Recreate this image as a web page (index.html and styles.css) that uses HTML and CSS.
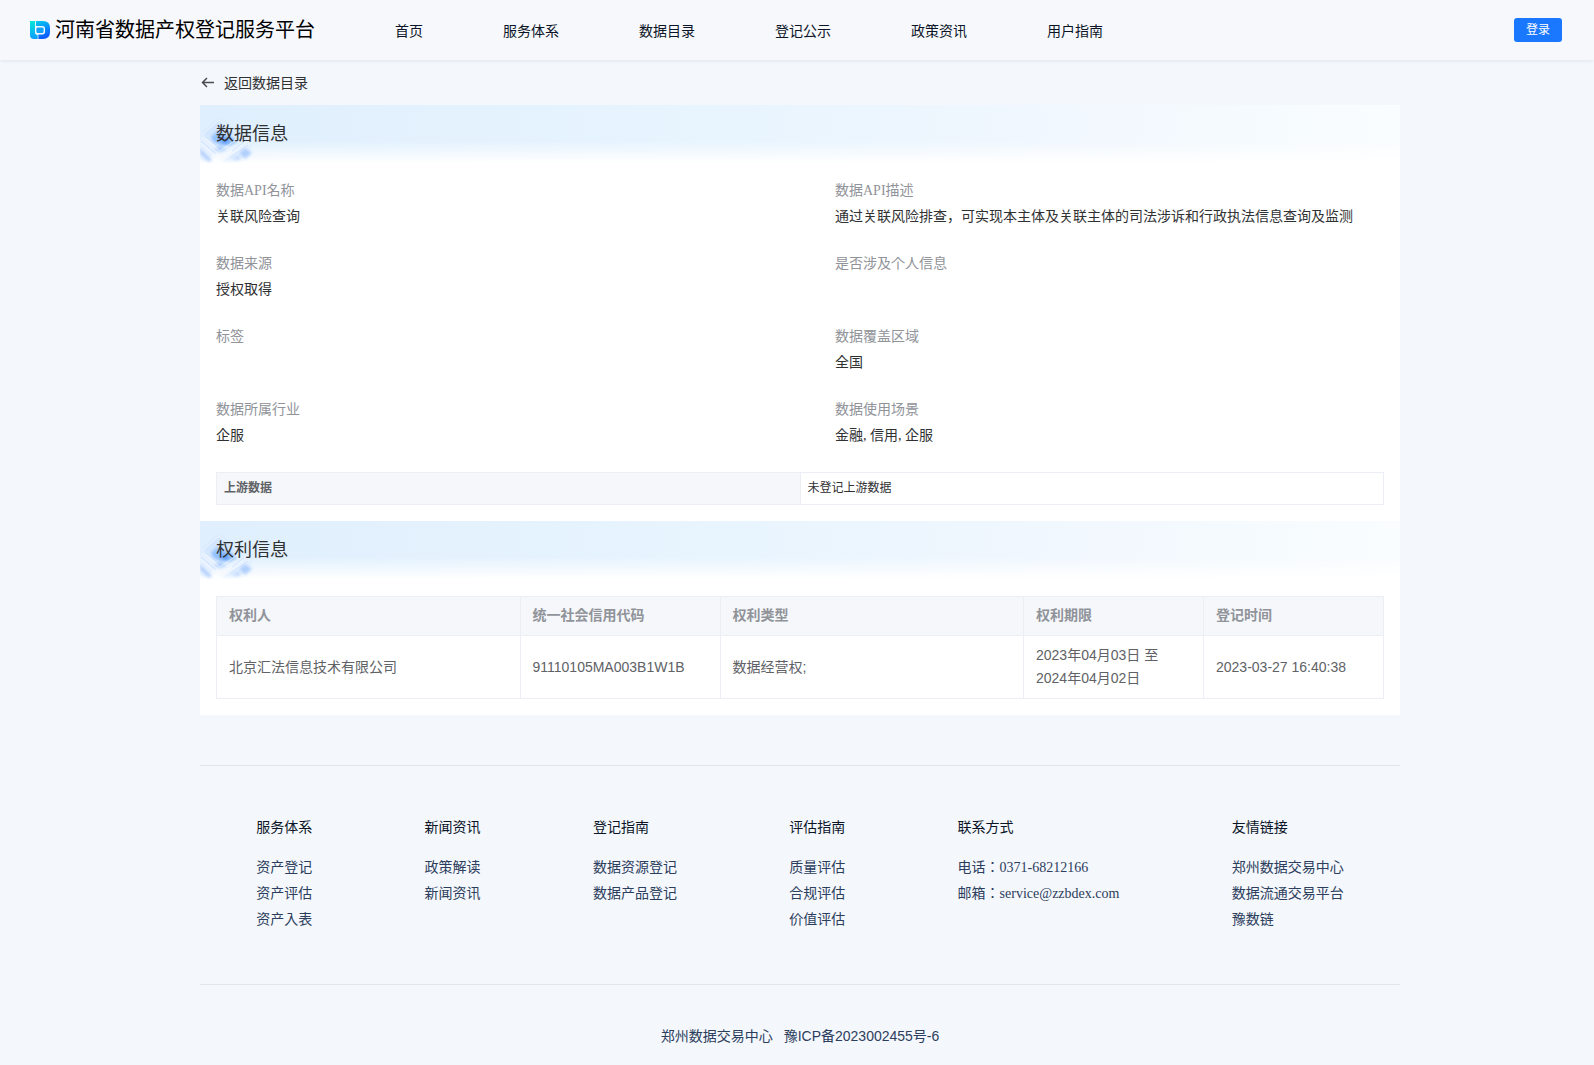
FILE: index.html
```html
<!DOCTYPE html>
<html lang="ja">

<head>
    <meta charset="UTF-8" />
    <meta name="viewport" content="width=device-width, initial-scale=1.0" />
    <title>河南省数据产权登记服务平台</title>
    <link rel="stylesheet" href="styles.css">
</head>

<body>
    <header class="header">
        <a class="logo" href="#">
            <svg width="20" height="20" viewBox="0 0 20 20" aria-hidden="true">
                <defs>
                    <linearGradient id="logoLeft" x1="0" y1="0" x2="0" y2="1">
                        <stop offset="0" stop-color="#08e8d4" />
                        <stop offset="1" stop-color="#0a9cff" />
                    </linearGradient>
                    <linearGradient id="logoRight" x1="0" y1="0" x2="0.3" y2="1">
                        <stop offset="0" stop-color="#08cdf0" />
                        <stop offset="1" stop-color="#0a5cff" />
                    </linearGradient>
                </defs>
                <path d="M0 1h5v11q0 3 3 3v4H4q-4 0-4-4z" fill="url(#logoLeft)" />
                <path d="M6 1h7q7 0 7 7v4q0 7-7 7H8V6H6z" fill="url(#logoRight)" />
                <rect x="5.700" y="6.700" width="8.600" height="7" rx="2" fill="#12a2f8" stroke="#f2fbff" stroke-width="1.400" />
                <path d="M5.500 1v6M8 14v5" stroke="#d9f3ff" stroke-width=".8" />
            </svg>
            <span>河南省数据产权登记服务平台</span>
        </a>
        <nav class="nav">
            <a href="#">首页</a>
            <a href="#">服务体系</a>
            <a href="#">数据目录</a>
            <a href="#">登记公示</a>
            <a href="#">政策资讯</a>
            <a href="#">用户指南</a>
        </nav>
        <button class="login-btn" type="button">登录</button>
    </header>

    <!-- 装饰图形, 两个标题栏共用 -->
    <svg class="defs" width="0" height="0" aria-hidden="true">
        <defs>
            <filter id="soft" x="-20%" y="-20%" width="140%" height="140%">
                <feGaussianBlur stdDeviation="1.600" />
            </filter>
            <symbol id="crystal" viewBox="0 0 56 60">
                <g filter="url(#soft)">
                    <path d="M19 14L38 27 19 41 2 28z" fill="#d3e6fd" />
                    <path d="M0 30L20 43 5 57 0 54z" fill="#e6f1ff" />
                    <path d="M22 56L50 36 52 44 36 56z" fill="#e2efff" />
                    <path d="M11 32L17 26 24 29 32 32 37 37 29 41 20 40 13 37z" fill="#94c2fd" />
                    <path d="M20 34L28 33 29 38 23 39z" fill="#5f9cf9" />
                    <path d="M14 44L20 41 27 44 20 47z" fill="#a8ccfd" />
                    <path d="M0 43L12 55 9 57 0 49z" fill="#b5d0fb" />
                    <path d="M39 48L45 43 52 48 45 54z" fill="#b0d0fd" />
                    <path d="M32 53L38 50 42 54 37 56z" fill="#c8defe" />
                </g>
                <path d="M3 29L19 15 36 28M5 33L20 46 40 32M0 38L22 56 50 38M28 49L47 36"
                    fill="none" stroke="#f6faff" stroke-width="1" opacity=".7" />
                <path d="M1 36L16 49M6 32L18 42M32 46L44 37M30 52L48 40" fill="none" stroke="#bcd8fd" stroke-width=".6" />
            </symbol>
        </defs>
    </svg>

    <div class="page">
        <main class="container">
            <a class="back" href="#">
                <svg width="16" height="16" viewBox="0 0 16 16" aria-hidden="true">
                    <path d="M7 4L2.500 8.500 7 13M2.500 8.500H14" fill="none" stroke="#4a4c50" stroke-width="1.500" />
                </svg>
                <span>返回数据目录</span>
            </a>

            <div class="card">
                <div class="banner">
                    <svg class="banner-art" width="56" height="60" aria-hidden="true">
                        <use href="#crystal" />
                    </svg>
                    <h2>数据信息</h2>
                </div>
                <dl class="info">
                    <div class="info-item">
                        <dt>数据API名称</dt>
                        <dd>关联风险查询</dd>
                    </div>
                    <div class="info-item">
                        <dt>数据API描述</dt>
                        <dd>通过关联风险排查，可实现本主体及关联主体的司法涉诉和行政执法信息查询及监测</dd>
                    </div>
                    <div class="info-item">
                        <dt>数据来源</dt>
                        <dd>授权取得</dd>
                    </div>
                    <div class="info-item">
                        <dt>是否涉及个人信息</dt>
                        <dd></dd>
                    </div>
                    <div class="info-item">
                        <dt>标签</dt>
                        <dd></dd>
                    </div>
                    <div class="info-item">
                        <dt>数据覆盖区域</dt>
                        <dd>全国</dd>
                    </div>
                    <div class="info-item">
                        <dt>数据所属行业</dt>
                        <dd>企服</dd>
                    </div>
                    <div class="info-item">
                        <dt>数据使用场景</dt>
                        <dd>金融, 信用, 企服</dd>
                    </div>
                </dl>
                <table class="upstream">
                    <tr>
                        <th scope="row">上游数据</th>
                        <td>未登记上游数据</td>
                    </tr>
                </table>

                <div class="banner">
                    <svg class="banner-art" width="56" height="60" aria-hidden="true">
                        <use href="#crystal" />
                    </svg>
                    <h2>权利信息</h2>
                </div>
                <table class="rights">
                    <colgroup>
                        <col class="col-auto">
                        <col class="col-code">
                        <col class="col-auto">
                        <col class="col-date">
                        <col class="col-date">
                    </colgroup>
                    <thead>
                        <tr>
                            <th>权利人</th>
                            <th>统一社会信用代码</th>
                            <th>权利类型</th>
                            <th>权利期限</th>
                            <th>登记时间</th>
                        </tr>
                    </thead>
                    <tbody>
                        <tr>
                            <td>北京汇法信息技术有限公司</td>
                            <td>91110105MA003B1W1B</td>
                            <td>数据经营权;</td>
                            <td>2023年04月03日 至 2024年04月02日</td>
                            <td>2023-03-27 16:40:38</td>
                        </tr>
                    </tbody>
                </table>
            </div>
        </main>

        <footer class="container footer">
            <div class="footer-links">
                <div class="footer-col">
                    <h3>服务体系</h3>
                    <a href="#">资产登记</a>
                    <a href="#">资产评估</a>
                    <a href="#">资产入表</a>
                </div>
                <div class="footer-col">
                    <h3>新闻资讯</h3>
                    <a href="#">政策解读</a>
                    <a href="#">新闻资讯</a>
                </div>
                <div class="footer-col">
                    <h3>登记指南</h3>
                    <a href="#">数据资源登记</a>
                    <a href="#">数据产品登记</a>
                </div>
                <div class="footer-col">
                    <h3>评估指南</h3>
                    <a href="#">质量评估</a>
                    <a href="#">合规评估</a>
                    <a href="#">价值评估</a>
                </div>
                <div class="footer-col">
                    <h3>联系方式</h3>
                    <span>电话：0371-68212166</span>
                    <span>邮箱：service@zzbdex.com</span>
                </div>
                <div class="footer-col">
                    <h3>友情链接</h3>
                    <a href="#">郑州数据交易中心</a>
                    <a href="#">数据流通交易平台</a>
                    <a href="#">豫数链</a>
                </div>
            </div>
            <div class="copyright">
                <span>郑州数据交易中心</span>
                <a href="#">豫ICP备2023002455号-6</a>
            </div>
        </footer>
    </div>
</body>

</html>
```
FILE: styles.css
```css
* {
    box-sizing: border-box;
}

body {
    margin: 0;
    background-color: #f4f7fc;
    font-family: "Liberation Serif", "Noto Sans CJK JP", serif;
    font-size: 14px;
    color: #303133;
}

a {
    color: inherit;
    text-decoration: none;
}

h2,
h3,
dl,
dd {
    margin: 0;
    font-weight: 400;
}

.defs {
    display: block;
}

/* header */
.header {
    display: flex;
    align-items: center;
    height: 60px;
    padding: 0 32px 0 30px;
    background-color: #f7f8fc;
    box-shadow: 0 1px 4px rgba(0, 21, 41, 0.08);
}

.logo {
    display: flex;
    align-items: center;
    gap: 5px;
    font-size: 20px;
    line-height: 30px;
    color: #000;
}

.nav {
    display: flex;
    flex: 1;
    gap: 80px;
    margin-left: 80px;
    padding-top: 4px;
    line-height: 22px;
    color: #0b1527;
}

.login-btn {
    width: 48px;
    height: 24px;
    padding: 0;
    border: none;
    border-radius: 3px;
    background-color: #1a78ff;
    color: #fff;
    font-family: "Liberation Sans", "Noto Sans CJK JP", sans-serif;
    font-size: 12px;
    line-height: 22px;
    cursor: pointer;
}

/* content */
.page {
    padding-left: 6px;
}

.container {
    max-width: 1200px;
    margin: 0 auto;
}

.back {
    display: flex;
    align-items: center;
    gap: 8px;
    height: 45px;
    padding-bottom: 2px;
}

.card {
    padding-bottom: 16px;
    background-color: #fff;
}

.banner {
    position: relative;
    height: 60px;
    padding: 15px 16px;
    background:
        linear-gradient(to bottom, rgba(255, 255, 255, 0) 60%, #fff 97%),
        linear-gradient(to right, #e0effd, #e5f3fe 30%, #eaf5fe 50%, #f2f8fe 75%, #f9fdff);
}

.banner-art {
    position: absolute;
    left: 0;
    top: 0;
}

.banner h2 {
    position: relative;
    font-size: 18px;
    line-height: 28px;
}

.info {
    display: grid;
    grid-template-columns: 1fr 1fr;
    gap: 21px 70px;
    padding: 13px 16px 23px;
    line-height: 26px;
}

.info dt {
    color: #909399;
}

.info dd {
    min-height: 26px;
}

table {
    width: calc(100% - 32px);
    margin: 0 16px;
    border-collapse: collapse;
    table-layout: fixed;
    font-family: "Liberation Sans", "Noto Sans CJK JP", sans-serif;
}

th,
td {
    border: 1px solid #ebeef5;
    text-align: left;
}

th {
    background-color: #f5f7fa;
    font-weight: 700;
}

.upstream {
    margin-bottom: 16px;
    font-size: 12px;
    line-height: 16px;
}

.upstream th,
.upstream td {
    padding: 7px 7px 8px;
}

.upstream th {
    color: #606266;
}

.rights {
    margin-top: 15px;
    line-height: 23px;
    color: #606266;
}

.rights th,
.rights td {
    padding: 8px 12px;
}

.rights th {
    padding: 7px 12px 8px;
    color: #909399;
}

.col-code {
    width: 200px;
}

.col-date {
    width: 180px;
}

/* footer */
.footer {
    margin-top: 50px;
    line-height: 26px;
    color: #2c3e5d;
}

.footer-links {
    display: flex;
    justify-content: space-around;
    padding: 49px 0 51px;
    border-top: 1px solid #e2e6ec;
    border-bottom: 1px solid #e2e6ec;
}

.footer-col {
    display: flex;
    flex-direction: column;
}

.footer-col h3 {
    margin-bottom: 14px;
    font-size: 14px;
    color: #0b1527;
}

.copyright {
    display: flex;
    justify-content: center;
    gap: 11px;
    padding: 38px 0 16px;
    font-family: "Liberation Sans", "Noto Sans CJK JP", sans-serif;
}
```
